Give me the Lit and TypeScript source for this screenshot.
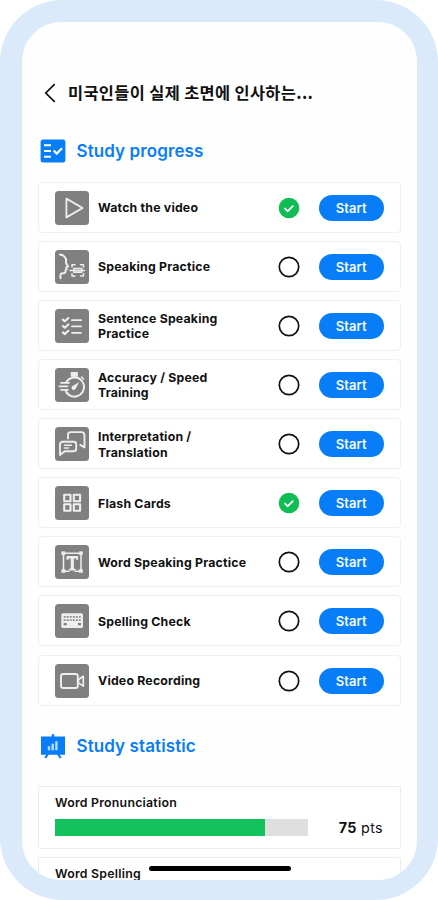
import { LitElement, html, svg, css, nothing } from "lit";
import { customElement, property } from "lit/decorators.js";

const glyphs: Record<string, unknown> = {
  play: svg`<path d="M11.4 7.6v18.8L27.6 17z" stroke-width="1.8"/>`,
  speak: svg`<path d="M5 4.500c2.500 .3 4.800 1.800 5.800 4.200 .8 2-.1 3.200 .3 4.500l2 3.300-1.900 1.200 .5 1.500-1.200 1.200c.3 2-.6 3.100-2.500 2.900-2-.2-2.900 .6-2.500 4.900" stroke-width="2"/>
    <path d="M17 17v-2.300h3M25.500 14.700h3V17M17 23.800v2.300h3M25.500 26.100h3v-2.300M15 20.400h14.500M18.800 18.600h8v3.600h-8z" stroke-width="1.500"/>`,
  list: svg`<path d="M7.800 10.600l2 1.700 3.600-3.300M7.800 17l2 1.700 3.600-3.300M7.800 23.400l2 1.700 3.600-3.300" stroke-width="2.100"/>
    <path d="M17 11.200h9M17 17.400h9M17 23.800h9" stroke-width="1.800"/>`,
  timer: svg`<circle cx="19.500" cy="19" r="9.600" stroke-width="2" stroke-dasharray="49 11.320" transform="rotate(-150 19.500 19)"/>
    <path d="M16.500 4.800h5.600v3.200h-5.600zM19.300 8v1.500M26.500 9l2 2" fill="#eee" stroke-width="1.500"/>
    <path d="M6 14.800h8M4.300 18.300h8.200M6 21.800h7M10.500 22.500l1.500 2.500" stroke-width="1.700"/>
    <path d="M24 14.200l-3.100 6.100a2.200 2.200 0 1 1-2.900-2.600z" fill="#eee" stroke="none"/>`,
  chat: svg`<path d="M13 11.500V7.800q0-2.700 2.700-2.700h10.500q3.300 0 3.300 3.300v12l-4.300-2.500" stroke-width="1.900"/>
    <path d="M8 14.700h10.700q2.500 0 2.500 2.500v4.200q0 2.900-2.900 2.900h-8.600L5 28V17.700q0-3 3-3z" stroke-width="1.900"/>
    <path d="M9.500 18.200h6.800M9.500 21h4" stroke-width="1.600"/>`,
  cards: svg`<path d="M9.200 8.800h6.300v6.500H9.200zM18.800 8.800h6.300v6.500h-6.300zM9.200 18.300h6.300v6.500H9.200zM18.800 18.300h6.300v6.500h-6.300z" stroke-width="2.100"/>`,
  word: svg`<path d="M10 8.200h14.600M8.500 10v14.500M26 10v14.500M10 26.200h4M20 26.200h4.600" stroke-width="1.500"/>
    <path d="M7 6.700h3v3H7zM24.500 6.700h3v3h-3zM7 24.500h3v3H7zM24.500 24.500h3v3h-3z" fill="#eee" stroke-width=".6"/>
    <path d="M11.500 11h11.600v3.800h-1.800l-.4-1.300h-2v10l1.700 .6v1.400H14v-1.400l1.700-.6v-10h-2l-.4 1.300h-1.800z" fill="#eee" stroke="none"/>`,
  keyboard: svg`<rect x="6.300" y="9.300" width="21.700" height="14.700" rx="1.500" fill="#eee" stroke="none"/>
    <path d="M8.700 12.900h17M8.700 16.200h17" stroke="#8c8c8c" stroke-width="1.700" stroke-dasharray="1.900 1.150" stroke-linecap="butt"/>
    <path d="M8.700 20.200h3M23 20.200h3" stroke="#7e7e7e" stroke-width="2.200" stroke-linecap="butt"/>`,
  camera: svg`<rect x="6" y="10" width="16.800" height="14" rx="2.200" stroke-width="1.900"/>
    <path d="M23.500 15.500l4.800-3.200v9.800l-4.800-3.200z" stroke-width="1.700"/>`,
};

@customElement("study-row")
class StudyRow extends LitElement {
  @property() label = "";
  @property() icon = "";
  @property({ type: Boolean }) done = false;

  static styles = css`
    :host { display: block; }
    .card {
      box-sizing: border-box; height: 51px; display: flex; align-items: center;
      border: 1.500px solid #f0f0f0; border-radius: 4px; padding: 1px 16.500px 0 16px; background: #fff;
    }
    .tile { width: 34px; height: 34px; flex: none; border-radius: 3.500px; background: #808080; }
    .tile svg { display: block; fill: none; stroke: #eee; stroke-linejoin: round; stroke-linecap: round; }
    .label { margin-left: 9px; padding-top: 1px; flex: 1; white-space: pre-line; font-size: 12.300px; line-height: 15.600px; font-weight: 650; color: #111; letter-spacing: .2px; }
    .status { flex: none; width: 22px; height: 22px; margin-right: 19px; }
    .start {
      flex: none; width: 64.500px; height: 26px; padding: 0; border: 0; border-radius: 13px;
      background: #087df8; color: #f4faff; font: 600 13px/26px Inter, "Noto Sans", sans-serif; letter-spacing: .1px;
    }
  `;

  render() {
    return html`<div class="card">
      <div class="tile"><svg width="34" height="34" viewBox="0 0 34 34">${glyphs[this.icon]}</svg></div>
      <div class="label">${this.label}</div>
      <svg class="status" viewBox="0 0 22 22" fill="none">
        ${this.done
          ? svg`<circle cx="11" cy="11" r="10.300" fill="#10bd55"/><path d="M6.500 11.200l3.200 3 5.600-5.500" stroke="#fff" stroke-width="1.700"/>`
          : svg`<circle cx="11" cy="11" r="9.700" stroke="#111" stroke-width="1.700"/>`}
      </svg>
      <button class="start">Start</button>
    </div>`;
  }
}

const tasks = [
  { label: "Watch the video", icon: "play", done: true },
  { label: "Speaking Practice", icon: "speak" },
  { label: "Sentence Speaking\nPractice", icon: "list" },
  { label: "Accuracy / Speed\nTraining", icon: "timer" },
  { label: "Interpretation /\nTranslation", icon: "chat" },
  { label: "Flash Cards", icon: "cards", done: true },
  { label: "Word Speaking Practice", icon: "word" },
  { label: "Spelling Check", icon: "keyboard" },
  { label: "Video Recording", icon: "camera" },
];

@customElement("app-root")
class AppRoot extends LitElement {
  static styles = css`
    :host { display: block; background: #fff; font-family: Inter, "Noto Sans CJK KR", sans-serif; color: #111; }
    .phone { box-sizing: border-box; height: 900px; padding: 21.500px 21px 20.500px 21.500px; border-radius: 62px; background: #dbeafb; }
    .screen { position: relative; box-sizing: border-box; height: 858px; overflow: hidden; border-radius: 39px; background: #fefefe; padding: 58.500px 16px 0 16.500px; }
    .top { display: flex; align-items: center; height: 26px; padding-left: 6px; }
    .top svg { flex: none; }
    .title { margin: -2px 0 0 12px; font: 700 16.400px/24px "Noto Sans CJK KR", sans-serif; letter-spacing: .35px; white-space: nowrap; }
    .head { display: flex; align-items: center; height: 28px; gap: 10.500px; padding-left: 2px; color: #087df8; }
    .head h2 { margin: 0; font-size: 17px; line-height: 28px; font-weight: 620; letter-spacing: .1px; white-space: nowrap; }
    .progress { margin-top: 30.500px; }
    .rows { display: flex; flex-direction: column; gap: 8.150px; margin-top: 17px; }
    .statistic { margin-top: 26px; }
    .stats { display: flex; flex-direction: column; gap: 8px; margin-top: 26px; }
    .stat { box-sizing: border-box; height: 63px; border: 1.300px solid #ededed; border-radius: 2px; padding: 8px 17px 0 16px; background: #fff; }
    .name { font-size: 12.300px; line-height: 16px; font-weight: 600; letter-spacing: .25px; }
    .measure { display: flex; align-items: center; justify-content: space-between; margin-top: 8px; height: 17px; }
    .track { width: 253px; height: 17px; background: #dfdfdf; }
    .fill { height: 100%; background: #12c05c; }
    .score { font-size: 14.300px; line-height: 17px; letter-spacing: .35px; white-space: nowrap; }
    .score b { font-weight: 650; }
    .homebar { position: absolute; left: 127.500px; bottom: 9px; width: 142px; height: 4.500px; border-radius: 3px; background: #000; }
  `;

  private stat(name: string, value?: number, filled = 0) {
    return html`<div class="stat">
      <div class="name">${name}</div>
      ${value === undefined ? nothing : html`<div class="measure">
        <div class="track"><div class="fill" style="width:${filled}%"></div></div>
        <div class="score"><b>${value}</b> pts</div>
      </div>`}
    </div>`;
  }

  render() {
    return html`<div class="phone"><div class="screen">
      <div class="top">
        <svg width="12" height="20" viewBox="0 0 12 20" fill="none"><path d="M10.700 1.200L1.800 10l8.900 8.800" stroke="#111" stroke-width="1.700"/></svg>
        <div class="title">미국인들이 실제 초면에 인사하는...</div>
      </div>
      <div class="head progress">
        <svg width="26" height="24" viewBox="0 0 26 24" fill="none"><rect x=".6" y=".6" width="24.800" height="22.800" rx="2.500" fill="#087df8"/>
          <path d="M4 6.200h7M4 12h7M4 17.700h7" stroke="#fff" stroke-width="1.900"/><path d="M13.700 11.500l3 3 5.300-5.300" stroke="#fff" stroke-width="2.300"/></svg>
        <h2>Study progress</h2>
      </div>
      <div class="rows">
        ${tasks.map((t) => html`<study-row .label=${t.label} .icon=${t.icon} .done=${!!t.done}></study-row>`)}
      </div>
      <div class="head statistic">
        <svg width="26" height="26" viewBox="0 0 26 26" fill="none"><path d="M1 3.500h10.700V1.300h2.600v2.200H25v18.200H1z" fill="#087df8"/>
          <path d="M8 21l-2.700 4M18 21l2.700 4" stroke="#087df8" stroke-width="2.200"/>
          <path d="M9 13.200v4M12.700 10.700v6.500M16.400 8.200v9" stroke="#b5ddfb" stroke-width="2.400"/></svg>
        <h2>Study statistic</h2>
      </div>
      <div class="stats">
        ${this.stat("Word Pronunciation", 75, 83.2)}
        ${this.stat("Word Spelling")}
      </div>
      <div class="homebar"></div>
    </div></div>`;
  }
}
